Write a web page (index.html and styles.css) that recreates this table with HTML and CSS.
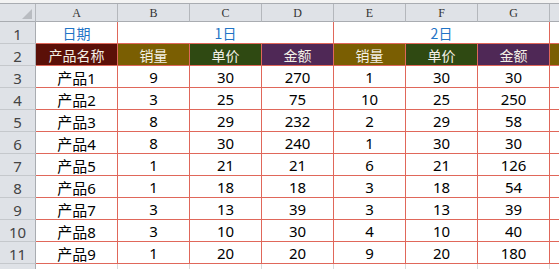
FILE: index.html
```html
<!DOCTYPE html>
<html>
<head>
<meta charset="utf-8">
<link rel="stylesheet" href="styles.css">
</head>
<body>
<div class="frame">
<div class="topstrip"></div>
<div class="sheet">
  <div class="ch corner"><span class="tri"></span></div>
  <div class="ch">A</div><div class="ch">B</div><div class="ch">C</div><div class="ch">D</div><div class="ch">E</div><div class="ch">F</div><div class="ch">G</div><div class="ch"></div>

  <div class="rh">1</div>
  <div class="c title">日期</div>
  <div class="c title span3">1日</div>
  <div class="c title span3">2日</div>
  <div class="c"></div>

  <div class="rh">2</div>
  <div class="c hd maroon">产品名称</div>
  <div class="c hd olive">销量</div>
  <div class="c hd green">单价</div>
  <div class="c hd purple">金额</div>
  <div class="c hd olive">销量</div>
  <div class="c hd green">单价</div>
  <div class="c hd purple">金额</div>
  <div class="c hd olive"></div>

  <div class="rh">3</div><div class="c">产品1</div><div class="c">9</div><div class="c">30</div><div class="c">270</div><div class="c">1</div><div class="c">30</div><div class="c">30</div><div class="c"></div>
  <div class="rh">4</div><div class="c">产品2</div><div class="c">3</div><div class="c">25</div><div class="c">75</div><div class="c">10</div><div class="c">25</div><div class="c">250</div><div class="c"></div>
  <div class="rh">5</div><div class="c">产品3</div><div class="c">8</div><div class="c">29</div><div class="c">232</div><div class="c">2</div><div class="c">29</div><div class="c">58</div><div class="c"></div>
  <div class="rh">6</div><div class="c">产品4</div><div class="c">8</div><div class="c">30</div><div class="c">240</div><div class="c">1</div><div class="c">30</div><div class="c">30</div><div class="c"></div>
  <div class="rh">7</div><div class="c">产品5</div><div class="c">1</div><div class="c">21</div><div class="c">21</div><div class="c">6</div><div class="c">21</div><div class="c">126</div><div class="c"></div>
  <div class="rh">8</div><div class="c">产品6</div><div class="c">1</div><div class="c">18</div><div class="c">18</div><div class="c">3</div><div class="c">18</div><div class="c">54</div><div class="c"></div>
  <div class="rh">9</div><div class="c">产品7</div><div class="c">3</div><div class="c">13</div><div class="c">39</div><div class="c">3</div><div class="c">13</div><div class="c">39</div><div class="c"></div>
  <div class="rh">10</div><div class="c">产品8</div><div class="c">3</div><div class="c">10</div><div class="c">30</div><div class="c">4</div><div class="c">10</div><div class="c">40</div><div class="c"></div>
  <div class="rh">11</div><div class="c">产品9</div><div class="c">1</div><div class="c">20</div><div class="c">20</div><div class="c">9</div><div class="c">20</div><div class="c">180</div><div class="c"></div>

  <div class="rh"></div><div class="e"></div><div class="e"></div><div class="e"></div><div class="e"></div><div class="e"></div><div class="e"></div><div class="e"></div><div class="e"></div>
</div>
</div>
</body>
</html>
```
FILE: styles.css
```css
html, body {
  margin: 0;
  padding: 0;
  background: #ffffff;
  overflow: hidden;
}
.frame {
  width: 559px;
  height: 269px;
  overflow: hidden;
}
.topstrip {
  height: 3px;
  background: #f3f3f3;
  border-bottom: 1px solid #a9acb1;
}
.sheet {
  display: grid;
  grid-template-columns: 36px 82px repeat(7, 72px);
  grid-template-rows: 18px repeat(12, 22px);
  width: 622px;
  font-family: "Noto Sans", "Noto Sans CJK SC", sans-serif;
  font-size: 15px;
  color: #000;
}
.sheet > div {
  box-sizing: border-box;
  display: flex;
  align-items: center;
  justify-content: center;
  white-space: nowrap;
  overflow: hidden;
}
.ch {
  background: #dfe2e7;
  border-right: 1px solid #b4b7bc;
  border-bottom: 1px solid #a9acb1;
  font-family: "Liberation Serif", "DejaVu Serif", serif;
  font-size: 12px;
  color: #333;
  padding-top: 1px;
}
.corner {
  justify-content: flex-end !important;
  align-items: flex-end !important;
  padding: 0 3px 2px 0;
}
.tri {
  width: 0;
  height: 0;
  border-left: 10px solid transparent;
  border-bottom: 10px solid #b9bcc1;
}
.rh {
  background: #dfe2e7;
  border-right: 1px solid #a9acb1;
  border-bottom: 1px solid #c5c8cc;
  font-size: 15px;
  color: #444;
  padding-top: 3px;
}
.c {
  border-right: 1px solid #e0675a;
  border-bottom: 1px solid #e0675a;
  padding-top: 1px;
}
.title {
  color: #1f74c6;
  font-family: "Noto Sans CJK SC", sans-serif;
  font-size: 14px;
}
.span3 {
  grid-column: span 3;
}
.hd {
  color: #f3f0e6;
  font-family: "Noto Sans CJK SC", sans-serif;
  font-size: 14px;
}
.maroon { background: #5b1008; }
.olive { background: #7a5e02; }
.green { background: #2f4912; }
.purple { background: #4f2856; }
.e {
  border-right: 1px solid #d9d9d9;
  border-bottom: 1px solid #d9d9d9;
}
```
